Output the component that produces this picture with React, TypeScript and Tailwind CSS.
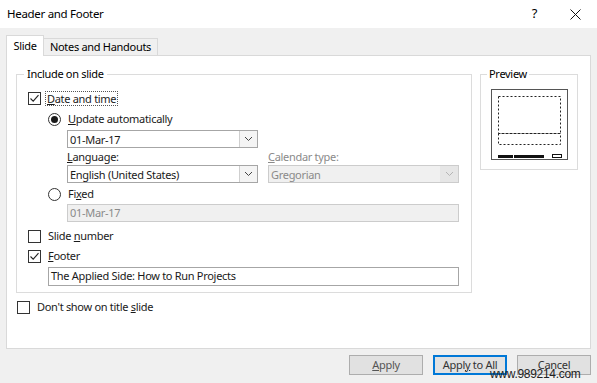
import { ReactNode } from 'react';

function Checkbox({ checked }: { checked?: boolean }) {
  return (
    <div className="w-[13px] h-[13px] border border-[#333] bg-white flex items-center justify-center shrink-0">
      {checked && (
        <svg width="11" height="11" viewBox="0 0 11 11">
          <path d="M1.5 5.5 L4.2 8.2 L9.5 2.2" fill="none" stroke="#222" strokeWidth="1.1" />
        </svg>
      )}
    </div>
  );
}

function Radio({ checked }: { checked?: boolean }) {
  return (
    <div className="w-[13px] h-[13px] rounded-full border border-[#333] bg-white flex items-center justify-center shrink-0">
      {checked && <div className="w-[7px] h-[7px] rounded-full bg-[#1a1a1a]" />}
    </div>
  );
}

function Chevron({ color }: { color: string }) {
  return (
    <svg width="9" height="6" viewBox="0 0 9 6">
      <path d="M1 1 L4.5 4.5 L8 1" fill="none" stroke={color} strokeWidth="1" />
    </svg>
  );
}

function Combo({ value, disabled }: { value: string; disabled?: boolean }) {
  return (
    <div
      className={
        disabled
          ? 'h-[18px] w-full flex border border-[#cccccc] bg-[#f0f0f0] text-[#8a8a8a]'
          : 'h-[18px] w-full flex border border-[#a6a6a6] bg-white'
      }
    >
      <div className="flex-1 flex items-center pl-[2px] leading-none">{value}</div>
      <div
        className={
          disabled
            ? 'w-[18px] flex items-center justify-center bg-[#e6e6e6]'
            : 'w-[18px] flex items-center justify-center border-l border-[#cfcfcf] bg-[#f4f4f4]'
        }
      >
        <Chevron color={disabled ? '#b5b5b5' : '#444'} />
      </div>
    </div>
  );
}

function Row({ children, className }: { children: ReactNode; className: string }) {
  return <div className={'h-[14px] flex items-center ' + className}>{children}</div>;
}

export default function App() {
  return (
    <div className="relative w-[597px] h-[383px] bg-[#f0f0f0] flex flex-col overflow-hidden text-[11px] tracking-[-0.3px] text-[#1a1a1a] font-['Noto_Sans',sans-serif]">
      {/* Title bar */}
      <div className="h-[28px] bg-white flex items-center pl-[7px] pr-[16px] shrink-0">
        <span className="flex-1 text-[11.5px] text-black">Header and Footer</span>
        <span className="text-[13px] text-black mr-[33px]">?</span>
        <svg width="11" height="11" viewBox="0 0 11 11">
          <path d="M0.5 0.5 L10.5 10.5 M10.5 0.5 L0.5 10.5" stroke="#111" strokeWidth="1" />
        </svg>
      </div>

      <div className="flex flex-col px-[6px] pt-[7px]">
        {/* Tabs */}
        <div className="flex items-end h-[20px]">
          <div className="relative z-10 -mb-px h-[21px] w-[38px] bg-white border border-b-0 border-[#d9d9d9] flex items-center justify-center text-black">
            Slide
          </div>
          <div className="h-[17px] w-[114px] border border-b-0 border-l-0 border-[#d9d9d9] flex items-center justify-center text-black">
            Notes and Handouts
          </div>
        </div>

        {/* Tab panel */}
        <div className="h-[294px] bg-white border border-[#d9d9d9] flex flex-col pl-[9px] pt-[18px]">
          <div className="flex items-start gap-[8px]">
            {/* Include on slide */}
            <div className="relative w-[456px] h-[219px] border border-[#dcdcdc] flex flex-col">
              <span className="absolute -top-[9px] left-[7px] bg-white px-[3px] text-black">Include on slide</span>

              <Row className="mt-[16px] pl-[11px]">
                <Checkbox checked />
                <span className="ml-[5px] px-[1px] outline outline-1 outline-dotted outline-[#555] leading-[13px]">
                  <u>D</u>ate and time
                </span>
              </Row>

              <Row className="mt-[7px] pl-[31px]">
                <Radio checked />
                <span className="ml-[7px]">
                  <u>U</u>pdate automatically
                </span>
              </Row>

              <div className="mt-[4px] ml-[50px] w-[191px]">
                <Combo value="01-Mar-17" />
              </div>

              <div className="mt-[2px] ml-[50px] flex gap-[10px]">
                <div className="w-[191px] flex flex-col">
                  <div className="h-[14px] flex items-center">
                    <span>
                      <u>L</u>anguage:
                    </span>
                  </div>
                  <div className="mt-[1px]">
                    <Combo value="English (United States)" />
                  </div>
                </div>
                <div className="w-[191px] flex flex-col">
                  <div className="h-[14px] flex items-center text-[#8a8a8a]">
                    <span>
                      <u>C</u>alendar type:
                    </span>
                  </div>
                  <div className="mt-[1px]">
                    <Combo value="Gregorian" disabled />
                  </div>
                </div>
              </div>

              <Row className="mt-[4px] pl-[31px]">
                <Radio />
                <span className="ml-[7px]">
                  Fi<u>x</u>ed
                </span>
              </Row>

              <div className="mt-[3px] ml-[50px] w-[392px] h-[18px] border border-[#cccccc] bg-[#f0f0f0] flex items-center pl-[2px] text-[#8a8a8a]">
                01-Mar-17
              </div>

              <Row className="mt-[7px] pl-[11px]">
                <Checkbox />
                <span className="ml-[7px]">
                  Slide <u>n</u>umber
                </span>
              </Row>

              <Row className="mt-[6px] pl-[11px]">
                <Checkbox checked />
                <span className="ml-[7px]">
                  <u>F</u>ooter
                </span>
              </Row>

              <div className="mt-[4px] ml-[31px] w-[411px] h-[19px] border border-[#a6a6a6] bg-white flex items-center pl-[2px]">
                The Applied Side: How to Run Projects
              </div>
            </div>

            {/* Preview */}
            <div className="relative w-[98px] h-[96px] border border-[#dcdcdc] pl-[10px] pt-[14px]">
              <span className="absolute -top-[9px] left-[6px] bg-white px-[2px] text-black">Preview</span>
              <svg width="77" height="71" viewBox="0 0 77 71">
                <rect x="0.5" y="0.5" width="76" height="70" fill="white" stroke="#555" strokeWidth="1" />
                <rect x="7.5" y="7.5" width="62" height="37" fill="none" stroke="#222" strokeWidth="1" strokeDasharray="2 2" />
                <rect x="7.5" y="44.5" width="62" height="11" fill="none" stroke="#222" strokeWidth="1" strokeDasharray="2 2" />
                <rect x="7" y="66" width="15" height="3" fill="#111" />
                <rect x="23" y="66" width="30" height="3" fill="#111" />
                <rect x="61.5" y="65.5" width="9" height="3" fill="none" stroke="#111" strokeWidth="1" />
              </svg>
            </div>
          </div>

          <Row className="mt-[7px] pl-[1px]">
            <Checkbox />
            <span className="ml-[7px]">
              Don't show on title <u>s</u>lide
            </span>
          </Row>
        </div>

        {/* Buttons */}
        <div className="mt-[6px] flex justify-end gap-[10px]">
          <div className="w-[74px] h-[20px] bg-[#e1e1e1] border border-[#adadad] flex items-center justify-center text-[#555]">
            <span>
              <u>A</u>pply
            </span>
          </div>
          <div className="w-[74px] h-[20px] bg-[#e1e1e1] border-2 border-[#0078d7] flex items-center justify-center text-[#333]">
            <span>
              Appl<u>y</u> to All
            </span>
          </div>
          <div className="w-[74px] h-[20px] bg-[#e1e1e1] border border-[#adadad] flex items-center justify-center text-[#333]">
            Cancel
          </div>
        </div>
      </div>

      {/* Watermark */}
      <span className="absolute left-[490px] top-[367px] text-[12px] leading-[14px] text-[#222] font-['Liberation_Sans',sans-serif]">
        www.989214.com
      </span>
    </div>
  );
}
